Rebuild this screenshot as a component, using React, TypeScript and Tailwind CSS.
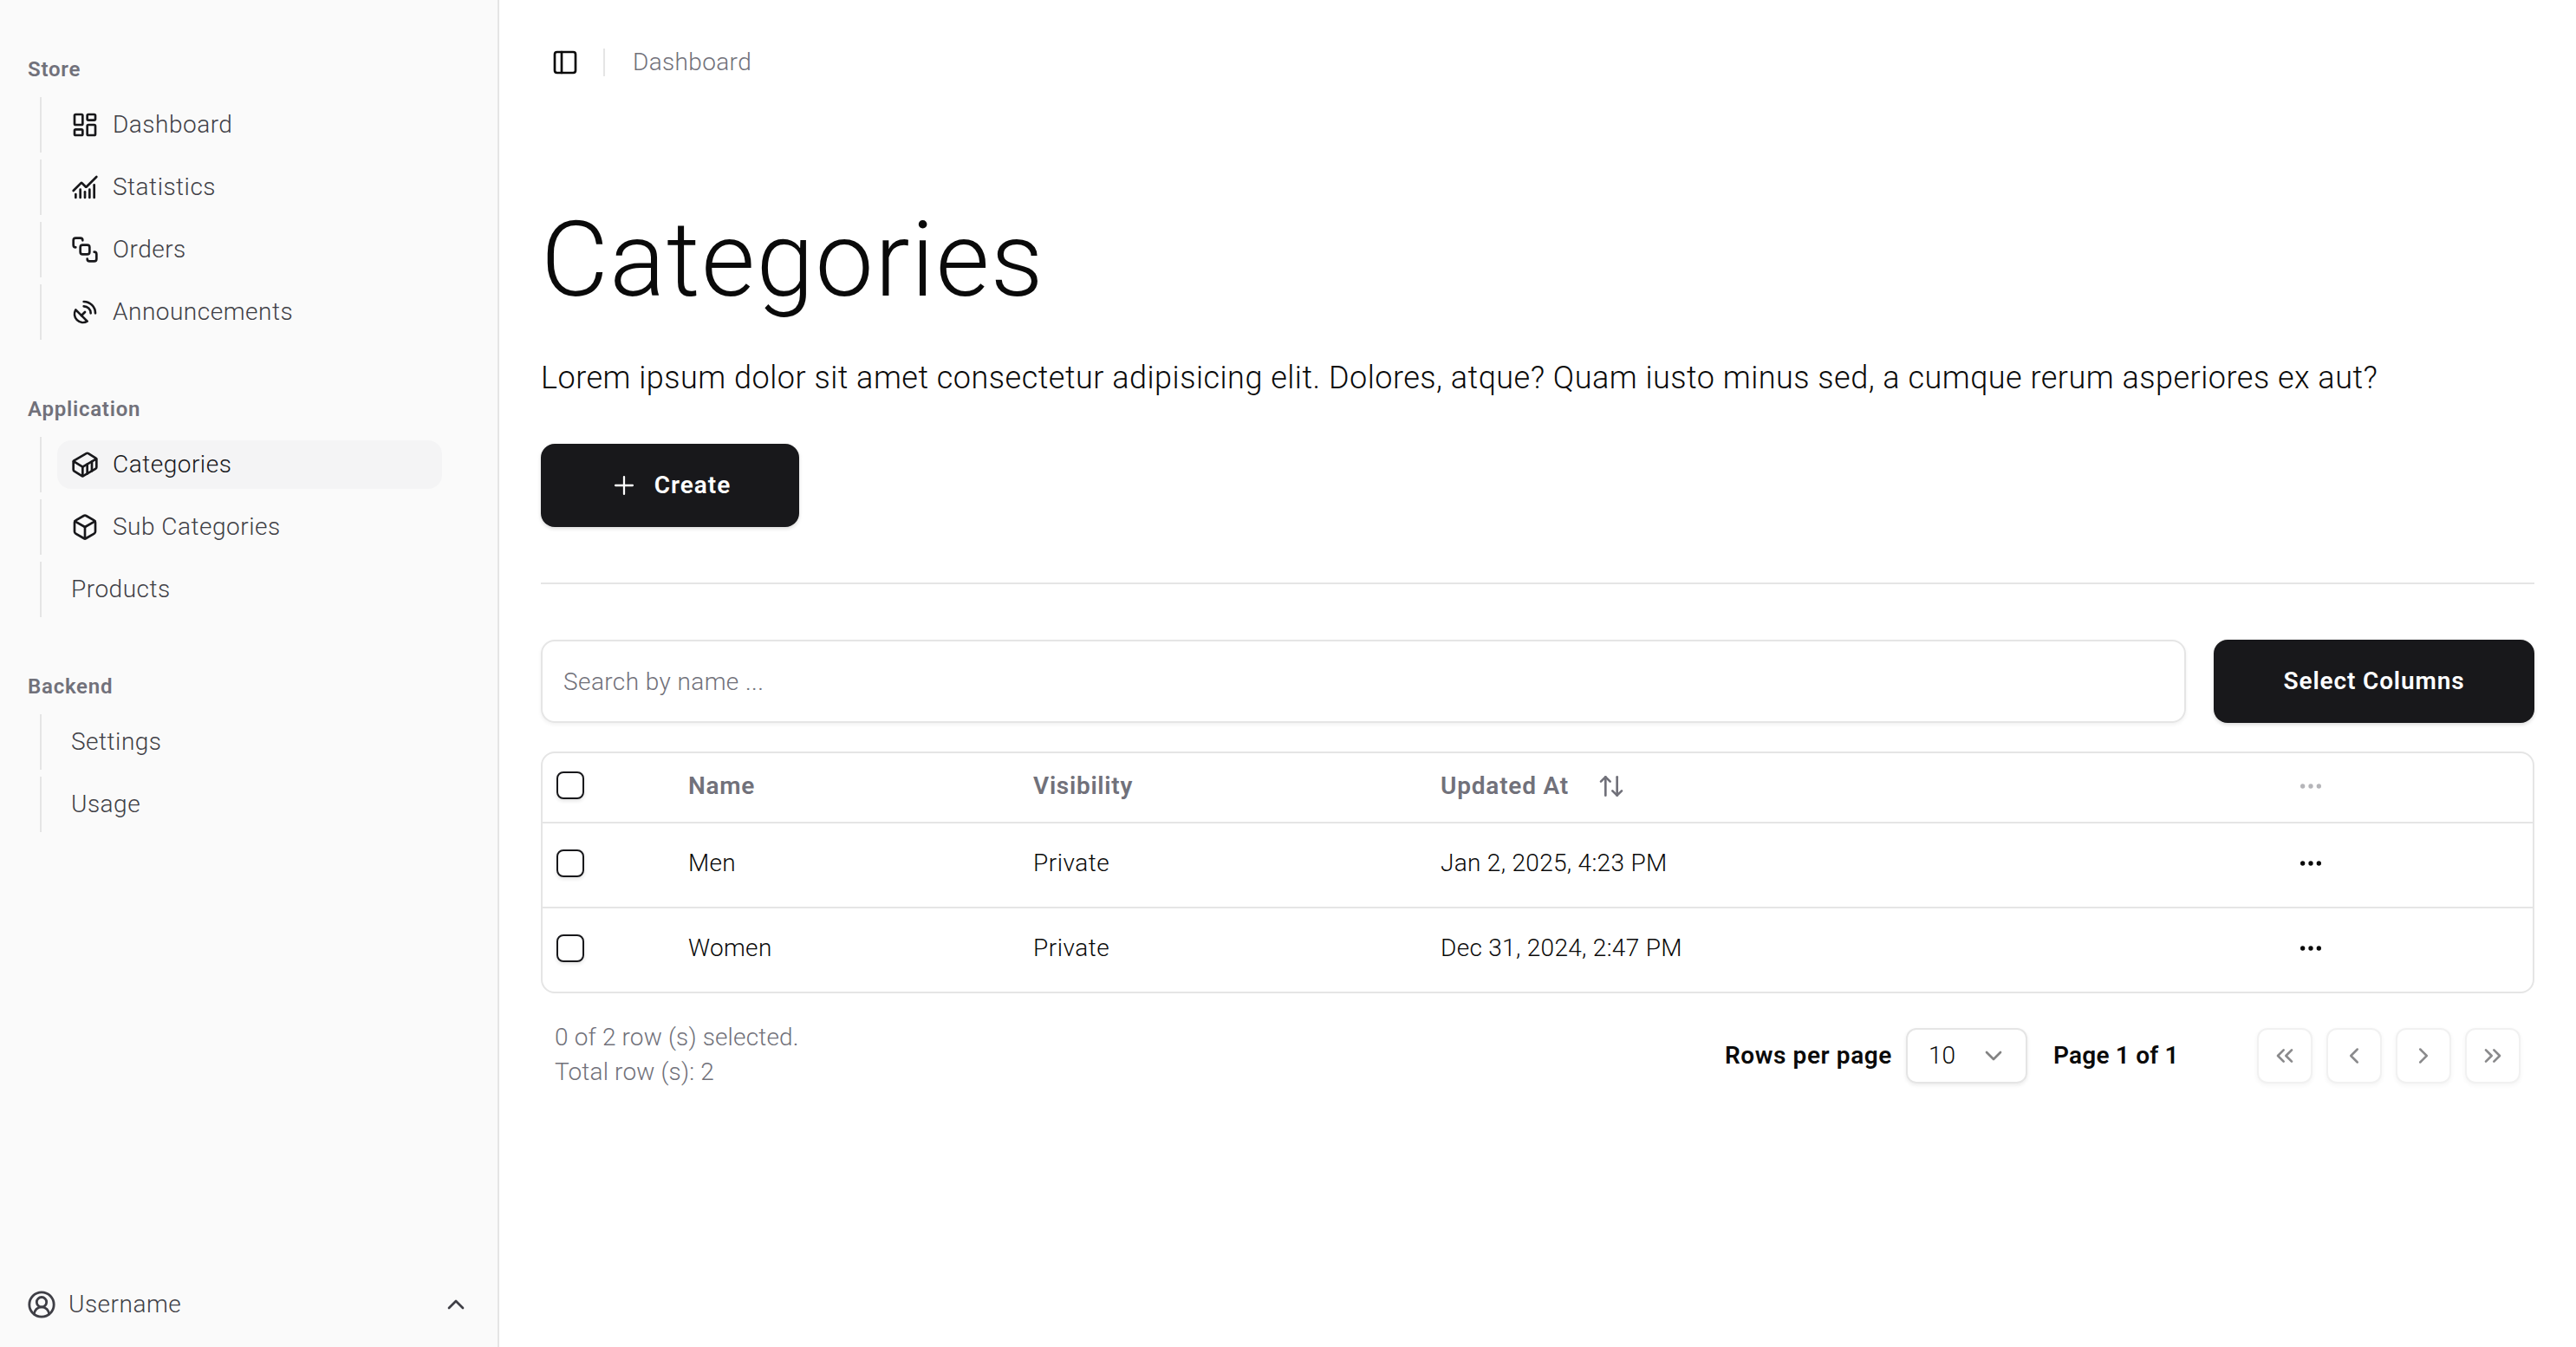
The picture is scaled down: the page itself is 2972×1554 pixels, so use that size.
import type { ReactNode } from "react";
import {
  ArrowUpDown,
  Box,
  BringToFront,
  ChartNoAxesCombined,
  ChevronDown,
  ChevronLeft,
  ChevronRight,
  ChevronsLeft,
  ChevronsRight,
  ChevronUp,
  CircleUserRound,
  Container,
  Ellipsis,
  LayoutDashboard,
  PanelLeft,
  Plus,
  SatelliteDish,
} from "lucide-react";

interface NavEntry {
  label: string;
  icon?: ReactNode;
  active?: boolean;
}

const navGroups: { title: string; items: NavEntry[] }[] = [
  {
    title: "Store",
    items: [
      { label: "Dashboard", icon: <LayoutDashboard size={32} /> },
      { label: "Statistics", icon: <ChartNoAxesCombined size={32} /> },
      { label: "Orders", icon: <BringToFront size={32} /> },
      { label: "Announcements", icon: <SatelliteDish size={32} /> },
    ],
  },
  {
    title: "Application",
    items: [
      { label: "Categories", icon: <Container size={32} />, active: true },
      { label: "Sub Categories", icon: <Box size={32} /> },
      { label: "Products" },
    ],
  },
  {
    title: "Backend",
    items: [{ label: "Settings" }, { label: "Usage" }],
  },
];

const rows = [
  { name: "Men", visibility: "Private", updated: "Jan 2, 2025, 4:23 PM" },
  { name: "Women", visibility: "Private", updated: "Dec 31, 2024, 2:47 PM" },
];

const Checkbox = () => (
  <span className="block size-8 rounded-lg border-2 border-[#18181b] bg-white shadow-[0_2px_4px_rgba(0,0,0,0.12)]" />
);

const PagerButton = ({ children }: { children: ReactNode }) => (
  <button className="flex size-16 items-center justify-center rounded-xl border-2 border-[#e5e5e5] bg-white text-[#18181b] opacity-50 shadow-[0_2px_4px_rgba(0,0,0,0.08)]">
    {children}
  </button>
);

const Sidebar = () => (
  <aside className="flex h-full w-[576px] shrink-0 flex-col justify-between border-r-2 border-[#e5e5e5] bg-[#fafafa]">
    <nav className="flex flex-col gap-[50px] pt-[50px]">
      {navGroups.map((group) => (
        <div key={group.title}>
          <div className="flex h-[62px] items-center pb-[2px] pl-8 text-[24px] font-semibold tracking-[0.75px] text-[#71717a]">{group.title}</div>
          <ul className="ml-[46px] flex flex-col gap-2">
            {group.items.map((item) => (
              <li key={item.label} className="flex h-16 w-[464px] items-center border-l-2 border-[#e5e5e5] pl-[18px]">
                <div
                  className={`flex h-14 w-[444px] items-center gap-4 rounded-2xl px-4 text-[28px] font-light tracking-[0.5px] ${
                    item.active ? "bg-[#f4f4f5] text-[#18181b]" : "text-[#3f3f46]"
                  }`}
                >
                  {item.icon && <span className="text-[#18181b]">{item.icon}</span>}
                  <span>{item.label}</span>
                </div>
              </li>
            ))}
          </ul>
        </div>
      ))}
    </nav>
    <div className="flex h-[98px] items-center justify-between pl-[31px] pr-8 text-[#3f3f46]">
      <div className="flex items-center gap-[14px]">
        <CircleUserRound size={34} />
        <span className="text-[28px] font-light tracking-[0.5px]">Username</span>
      </div>
      <ChevronUp size={32} />
    </div>
  </aside>
);

const App = () => {
  return (
    <div className="flex h-[1554px] w-full bg-white font-['Roboto',sans-serif] text-[#0a0a0a]">
      <Sidebar />
      <main className="min-w-0 flex-1 px-12">
        <header className="flex h-36 items-center pl-3">
          <PanelLeft size={32} className="text-[#0a0a0a]" />
          <span className="mx-7 h-8 w-0.5 bg-[#e5e5e5]" />
          <span className="pl-1 text-[28px] font-light tracking-[0.35px] text-[#71717a]">Dashboard</span>
        </header>

        <h1 className="mt-24 text-[120px] leading-[120px] font-light tracking-[1.4px]">Categories</h1>
        <p className="mt-12 text-[36px] leading-14 font-light tracking-[0.5px]">
          Lorem ipsum dolor sit amet consectetur adipisicing elit. Dolores, atque? Quam iusto minus sed, a cumque rerum asperiores ex aut?
        </p>

        <button className="mt-12 flex h-24 w-[298px] items-center justify-center gap-[18px] rounded-2xl bg-[#18181b] text-[28px] font-semibold tracking-[1px] text-white shadow-[0_2px_4px_rgba(0,0,0,0.15)]">
          <Plus size={34} strokeWidth={1.6} />
          Create
        </button>

        <div className="mt-16 h-0.5 bg-[#e5e5e5]" />

        <div className="mt-16 flex gap-8">
          <div className="flex h-24 flex-1 items-center rounded-2xl border-2 border-[#e5e5e5] px-6 pt-0.5 text-[28px] font-light tracking-[0.4px] text-[#71717a] shadow-[0_2px_4px_rgba(0,0,0,0.06)]">
            Search by name ...
          </div>
          <button className="h-24 w-[370px] rounded-2xl bg-[#18181b] text-[28px] font-semibold tracking-[0.85px] text-white shadow-[0_2px_4px_rgba(0,0,0,0.15)]">Select Columns</button>
        </div>

        <div className="mt-[33px] overflow-hidden rounded-2xl border-2 border-[#e5e5e5]">
          <table className="w-full table-fixed border-separate border-spacing-0 text-left text-[28px] font-light">
            <colgroup>
              <col className="w-[152px]" />
              <col className="w-[398px]" />
              <col className="w-[470px]" />
              <col className="w-[988px]" />
              <col />
            </colgroup>
            <thead>
              <tr className="h-[81px] text-[#71717a]">
                <th className="border-b-2 border-[#e5e5e5] px-4 pb-1.5 font-semibold">
                  <Checkbox />
                </th>
                <th className="border-b-2 border-[#e5e5e5] px-4 pb-1 font-semibold tracking-[0.7px]">Name</th>
                <th className="border-b-2 border-[#e5e5e5] px-4 pb-1 font-semibold tracking-[0.7px]">Visibility</th>
                <th className="border-b-2 border-[#e5e5e5] px-4 pb-1 font-semibold tracking-[0.8px]">
                  <span className="flex items-center gap-[33px]">
                    Updated At
                    <ArrowUpDown size={32} />
                  </span>
                </th>
                <th className="border-b-2 border-[#e5e5e5] px-4 pb-1">
                  <Ellipsis size={32} className="text-[#b5b5b9]" />
                </th>
              </tr>
            </thead>
            <tbody>
              {rows.map((row, i) => {
                const cell = `px-4 pb-1 ${i === 0 ? "border-b-2 border-[#e5e5e5]" : ""}`;
                return (
                  <tr key={row.name} className={i === 0 ? "h-[98px]" : "h-24"}>
                    <td className={cell}>
                      <Checkbox />
                    </td>
                    <td className={`${cell} tracking-[0.3px]`}>{row.name}</td>
                    <td className={`${cell} tracking-[0.5px]`}>{row.visibility}</td>
                    <td className={`${cell} tracking-[0.3px]`}>{row.updated}</td>
                    <td className={cell}>
                      <Ellipsis size={32} />
                    </td>
                  </tr>
                );
              })}
            </tbody>
          </table>
        </div>

        <div className="mt-[31px] flex items-start justify-between px-4">
          <div className="text-[28px] leading-10 font-light tracking-[0.15px] text-[#71717a]">
            <p>0 of 2 row (s) selected.</p>
            <p>Total row (s): 2</p>
          </div>
          <div className="mt-[9px] flex items-center">
            <span className="text-[28px] font-semibold tracking-[0.6px]">Rows per page</span>
            <div className="ml-4 flex h-16 w-[140px] items-center justify-between rounded-xl border-2 border-[#e5e5e5] pl-6 pr-[21px] text-[28px] font-light shadow-[0_2px_4px_rgba(0,0,0,0.08)]">
              10
              <ChevronDown size={32} className="opacity-50" />
            </div>
            <span className="ml-[30px] w-[235px] text-[28px] font-semibold tracking-[0.2px]">Page 1 of 1</span>
            <div className="flex gap-4">
              <PagerButton>
                <ChevronsLeft size={32} />
              </PagerButton>
              <PagerButton>
                <ChevronLeft size={30} />
              </PagerButton>
              <PagerButton>
                <ChevronRight size={30} />
              </PagerButton>
              <PagerButton>
                <ChevronsRight size={32} />
              </PagerButton>
            </div>
          </div>
        </div>
      </main>
    </div>
  );
};

export default App;
